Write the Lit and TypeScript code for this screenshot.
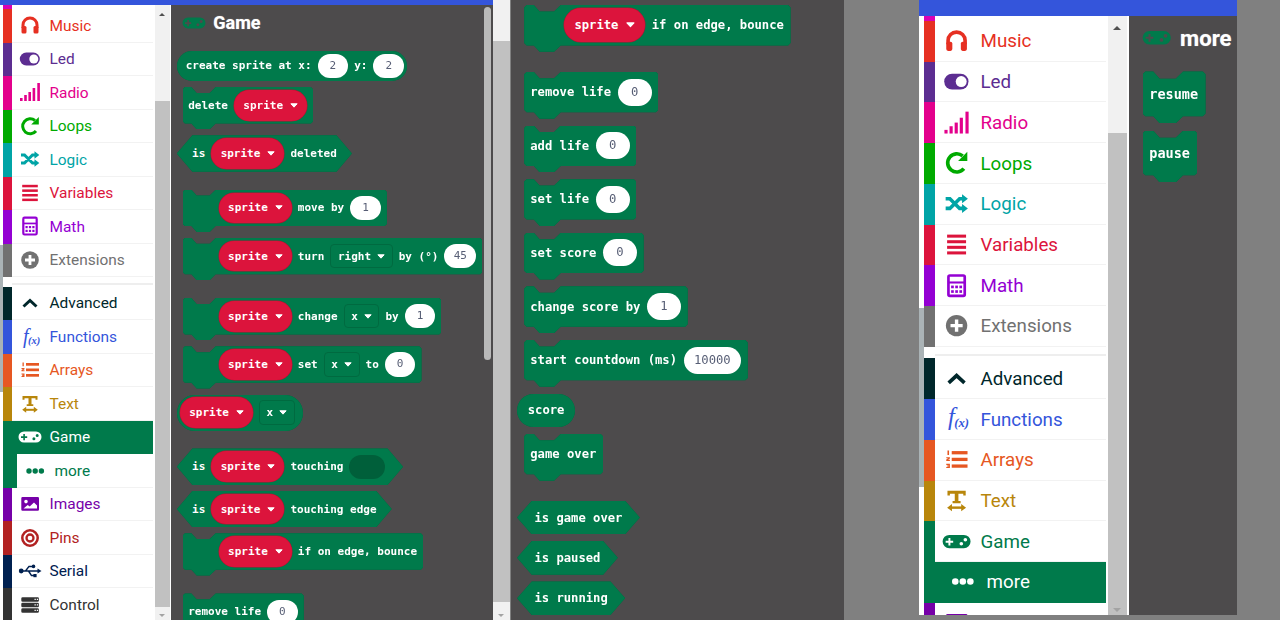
import { LitElement, html, css, svg, TemplateResult } from "lit";
import { customElement } from "lit/decorators.js";

const GAME = svg`<path fill="currentColor" fill-rule="evenodd" d="M6 6.500h12a5.500 5.500 0 0 1 0 11H6a5.500 5.500 0 0 1 0-11zM5.300 9v2.300H3v1.600h2.300v2.300h1.600v-2.300h2.300v-1.600H6.900V9zM15.900 12.300a1.500 1.500 0 1 0 0 3 1.500 1.500 0 0 0 0-3zM19.200 9a1.500 1.500 0 1 0 0 3 1.500 1.500 0 0 0 0-3z"/>`;

const ICONS: Record<string, unknown> = {
  music: svg`<path d="M5 15v-3a7 7 0 0 1 14 0v3" fill="none" stroke="currentColor" stroke-width="3"/><rect x="3.500" y="13" width="5" height="7.500" rx="1.500" fill="currentColor"/><rect x="15.500" y="13" width="5" height="7.500" rx="1.500" fill="currentColor"/>`,
  led: svg`<rect x="1.800" y="5.500" width="20" height="13" rx="6.500" fill="currentColor"/><circle cx="15.800" cy="12" r="4.500" fill="#fff"/>`,
  radio: svg`<rect x="2" y="18" width="2.600" height="3" fill="currentColor"/><rect x="6.200" y="15" width="2.600" height="6" fill="currentColor"/><rect x="10.400" y="12" width="2.600" height="9" fill="currentColor"/><rect x="14.600" y="8" width="2.600" height="13" fill="currentColor"/><rect x="19.300" y="3" width="2.600" height="18" fill="currentColor"/>`,
  loops: svg`<path d="M18 17a7.500 7.500 0 1 1-1-10.500" fill="none" stroke="currentColor" stroke-width="3"/><path d="M20.800 3v7.600h-7.600z" fill="currentColor"/>`,
  logic: svg`<path d="M3 8h3.500l8 8h2.500M3 16h3.500l8-8h2.500" fill="none" stroke="currentColor" stroke-width="3"/><path d="M16.500 4.300l4.800 3.700-4.800 3.700zM16.500 12.300l4.800 3.700-4.800 3.700z" fill="currentColor"/>`,
  variables: svg`<rect x="4.200" y="3.800" width="15.600" height="2.500" fill="currentColor"/><rect x="4.200" y="8.400" width="15.600" height="2.500" fill="currentColor"/><rect x="4.200" y="13" width="15.600" height="2.500" fill="currentColor"/><rect x="4.200" y="17.600" width="15.600" height="2.500" fill="currentColor"/>`,
  math: svg`<rect x="5.300" y="3.700" width="13.400" height="16.800" rx="1.200" fill="none" stroke="currentColor" stroke-width="2.200"/><rect x="5" y="8.600" width="14" height="1.700" fill="currentColor"/><g fill="currentColor"><rect x="7.500" y="12" width="2.200" height="2.200"/><rect x="10.900" y="12" width="2.200" height="2.200"/><rect x="14.300" y="12" width="2.200" height="2.200"/><rect x="7.500" y="15.800" width="2.200" height="2.200"/><rect x="10.900" y="15.800" width="2.200" height="2.200"/><rect x="14.300" y="15.800" width="2.200" height="2.200"/></g>`,
  extensions: svg`<circle cx="12" cy="12" r="8.800" fill="currentColor"/><path d="M12 7v10M7 12h10" stroke="#fff" stroke-width="2.800"/>`,
  advanced: svg`<path d="M5.500 15.500L12 9.500l6.500 6" fill="none" stroke="currentColor" stroke-width="3"/>`,
  functions: svg`<text x="5" y="17.500" font-family="Liberation Serif, serif" font-style="italic" font-size="20" fill="currentColor">f</text><text x="10" y="19" font-family="Liberation Serif, serif" font-style="italic" font-weight="700" font-size="10.500" fill="currentColor">(x)</text>`,
  arrays: svg`<rect x="8" y="5" width="13" height="2.700" fill="currentColor"/><rect x="8" y="10.500" width="13" height="2.700" fill="currentColor"/><rect x="8" y="16" width="13" height="2.700" fill="currentColor"/><path d="M4.500 4.500h1.300v3.800H4.500zM3.500 10h3v1.200l-1.500 1h1.500v1h-3v-1.200l1.500-1H3.500zM3.500 15.500h3v3.500h-3v-1h1.800v-.300H4v-.900h1.300v-.300H3.500z" fill="currentColor"/>`,
  text: svg`<path d="M4.500 4h15v3.800h-2V6.300h-4v6h1.800v1.800H8.700v-1.800h1.800v-6h-4v1.500h-2z" fill="currentColor"/><path d="M7 17.800h10" stroke="currentColor" stroke-width="2"/><path d="M8.200 14.800v6l-4-3zM15.800 14.800v6l4-3z" fill="currentColor"/>`,
  game: GAME,
  more: svg`<circle cx="6" cy="12" r="2.700" fill="currentColor"/><circle cx="12.200" cy="12" r="2.700" fill="currentColor"/><circle cx="18.400" cy="12" r="2.700" fill="currentColor"/>`,
  images: svg`<path fill="currentColor" fill-rule="evenodd" d="M4.500 5h15.300a1.200 1.200 0 0 1 1.200 1.200v11.400a1.200 1.200 0 0 1-1.200 1.200H4.500a1.200 1.200 0 0 1-1.200-1.200V6.200A1.200 1.200 0 0 1 4.500 5zM8 7.800a1.800 1.800 0 1 0 0 3.600 1.800 1.800 0 0 0 0-3.600zM5.500 16.600h13.500v-3l-3-3-4.300 4-2-1.500z"/>`,
  pins: svg`<circle cx="12" cy="12" r="7.700" fill="none" stroke="currentColor" stroke-width="2.500"/><circle cx="12" cy="12" r="3.500" fill="none" stroke="currentColor" stroke-width="2.300"/>`,
  serial: svg`<path d="M2 12h19M7.500 12l3.500-4.600h3.500M10.500 12l3 4.600h2.500" fill="none" stroke="currentColor" stroke-width="1.500"/><circle cx="3.200" cy="12" r="2.400" fill="currentColor"/><circle cx="15.500" cy="7.400" r="1.800" fill="currentColor"/><rect x="15.400" y="15" width="3.200" height="3.200" fill="currentColor"/><path d="M19.500 9.500l4 2.500-4 2.500z" fill="currentColor"/>`,
  control: svg`<path fill="currentColor" fill-rule="evenodd" d="M4.600 4.300h15a1.300 1.300 0 0 1 1.300 1.300v1.800a1.300 1.300 0 0 1-1.300 1.300h-15a1.300 1.300 0 0 1-1.300-1.300V5.600a1.300 1.300 0 0 1 1.300-1.300zM16.500 5.800v1.300h1.300V5.800zM18.800 5.800v1.300h1.300V5.800zM4.600 9.800h15a1.300 1.300 0 0 1 1.300 1.300v1.800a1.300 1.300 0 0 1-1.300 1.300h-15a1.300 1.300 0 0 1-1.300-1.300v-1.800a1.300 1.300 0 0 1 1.300-1.300zM16.500 11.300v1.300h1.300v-1.300zM18.800 11.300v1.300h1.300v-1.300zM4.600 15.300h15a1.300 1.300 0 0 1 1.300 1.300v1.800a1.300 1.300 0 0 1-1.300 1.300h-15a1.300 1.300 0 0 1-1.300-1.300v-1.800a1.300 1.300 0 0 1 1.300-1.300zM16.500 16.800v1.300h1.300v-1.300zM18.800 16.800v1.300h1.300v-1.300z"/>`,
};

interface Row { id: string; label: string; color: string; sub?: boolean }

const ROWS_A: Row[] = [
  { id: "music", label: "Music", color: "#e63022" },
  { id: "led", label: "Led", color: "#5c2d91" },
  { id: "radio", label: "Radio", color: "#e3008c" },
  { id: "loops", label: "Loops", color: "#00aa00" },
  { id: "logic", label: "Logic", color: "#00a4a6" },
  { id: "variables", label: "Variables", color: "#dc143c" },
  { id: "math", label: "Math", color: "#9400d3" },
  { id: "extensions", label: "Extensions", color: "#717171" },
];
const ROWS_B: Row[] = [
  { id: "advanced", label: "Advanced", color: "#00272b" },
  { id: "functions", label: "Functions", color: "#3455db" },
  { id: "arrays", label: "Arrays", color: "#e65722" },
  { id: "text", label: "Text", color: "#b8860b" },
  { id: "game", label: "Game", color: "#007a4b" },
  { id: "more", label: "more", color: "#007a4b", sub: true },
  { id: "images", label: "Images", color: "#7600a8" },
  { id: "pins", label: "Pins", color: "#b22222" },
  { id: "serial", label: "Serial", color: "#002050" },
  { id: "control", label: "Control", color: "#333333" },
];

const t = (s: string) => html`<span class="t">${s}</span>`;
const caret = html`<svg class="caret" viewBox="0 0 8 5"><path d="M.8.8h6.400L4 4.200z" fill="#fff" stroke="#fff" stroke-width="1" stroke-linejoin="round"/></svg>`;
const sprite = html`<span class="sprite"><span class="t">sprite</span>${caret}</span>`;
const val = (s: string) => html`<span class="val">${s}</span>`;
const dd = (s: string) => html`<span class="dd"><span class="t">${s}</span>${caret}</span>`;
const slot = html`<span class="slot"></span>`;

const blk = (kind: string, parts: unknown[], group = false) =>
  html`<div class="wrap ${kind.startsWith("stmt") ? "at-stmt" : ""} ${group ? "group" : ""}"><div class="b ${kind}">${parts}</div></div>`;

const PANEL1 = [
  blk("rep rep-long", [t("create sprite at x:"), val("2"), t("y:"), val("2")]),
  blk("stmt", [t("delete"), sprite]),
  blk("hex", [t("is"), sprite, t("deleted")]),
  blk("stmt lead", [sprite, t("move by"), val("1")], true),
  blk("stmt lead", [sprite, t("turn"), dd("right"), t("by (°)"), val("45")]),
  blk("stmt lead", [sprite, t("change"), dd("x"), t("by"), val("1")], true),
  blk("stmt lead", [sprite, t("set"), dd("x"), t("to"), val("0")]),
  blk("rep rep-sprite", [sprite, dd("x")]),
  blk("hex", [t("is"), sprite, t("touching"), slot], true),
  blk("hex", [t("is"), sprite, t("touching edge")]),
  blk("stmt lead", [sprite, t("if on edge, bounce")]),
  blk("stmt", [t("remove life"), val("0")], true),
];
const PANEL2 = [
  blk("stmt lead", [sprite, t("if on edge, bounce")]),
  blk("stmt", [t("remove life"), val("0")], true),
  blk("stmt", [t("add life"), val("0")]),
  blk("stmt", [t("set life"), val("0")]),
  blk("stmt", [t("set score"), val("0")]),
  blk("stmt", [t("change score by"), val("1")]),
  blk("stmt", [t("start countdown (ms)"), val("10000")]),
  blk("rep rep-text", [t("score")]),
  blk("stmt", [t("game over")]),
  blk("hex small", [t("is game over")], true),
  blk("hex small", [t("is paused")]),
  blk("hex small", [t("is running")]),
];
const PANEL3 = [blk("stmt", [t("resume")]), blk("stmt", [t("pause")])];

@customElement("app-root")
export class AppRoot extends LitElement {
  static styles = css`
    :host { display: flex; width: 1280px; height: 620px; overflow: hidden; background: #808080; font-family: Roboto, sans-serif; }
    .panel { display: flex; background: #fff; overflow: hidden; flex: none; }
    .p1 { width: 510px; height: 620px; --gut: 3px; --bar: 5px; font-size: 16px; }
    .p2 { width: 333px; height: 620px; margin-left: 1px; background: #4d4b4c; }
    .p3 { width: 318px; height: 615px; margin-left: 75px; --gut: 5px; --bar: 16px; font-size: 19.45px; }
    .main { flex: 1; min-width: 0; display: flex; flex-direction: column; }
    .bar { height: var(--bar); background: #3455db; flex: none; }
    .body { flex: 1; min-height: 0; display: flex; }
    .gutter { width: var(--gut); flex: none; padding-top: 15em; box-sizing: border-box; }
    .gutter i { display: block; height: 9.2em; background: #aab3b6; }
    .toolbox { width: 9.375em; flex: none; overflow: hidden; }
    .sliver { height: .26em; width: .5625em; background: #d900b4; }
    .row { height: 2.094em; display: flex; align-items: center; border-bottom: 1px solid #f2f2f2; box-sizing: border-box; }
    .row span:last-child { font-size: .965em; padding-top: .05em; }
    .strip { align-self: stretch; width: .5625em; flex: none; margin-bottom: -1px; }
    .row.sub .strip { width: .875em; }
    .ico { width: 1.5em; height: 1.5em; margin-left: .344em; margin-right: .5em; flex: none; display: block; overflow: visible; }
    .sep { height: .6em; display: flex; flex-direction: column; justify-content: center; padding-top: .25em; box-sizing: border-box; }
    .sep i { display: block; height: 2px; background: #eeeeee; margin-left: .5625em; }
    .row.sel { background: #007a4b; color: #fff !important; border-bottom-color: #007a4b; }
    .sb { flex: none; display: flex; flex-direction: column; background: #f1f1f1; position: relative; overflow: hidden; }
    .sb.inner { width: .95em; margin-left: .1em; margin-right: .1em; }
    .sb.page { width: 17px; }
    .thumb { background: #c1c1c1; flex: none; }
    .arr { position: absolute; left: 50%; width: 0; height: 0; margin-left: -.22em; border-left: .22em solid transparent; border-right: .22em solid transparent; }
    .arr.up { top: .5em; border-bottom: .22em solid #505050; }
    .arr.down { bottom: .18em; border-top: .22em solid #a3a3a3; }
    .flyout { flex: 1; min-width: 0; background: #4d4b4c; overflow: hidden; position: relative; font-family: "DejaVu Sans Mono", monospace; font-weight: 700; color: #fff; }
    .fs1 { font-size: 11px; }
    .fs2 { font-size: 12.2px; padding-top: 5px; box-sizing: border-box; }
    .fs3 { font-size: 13.5px; }
    .title { height: 3.27em; margin-left: .98em; margin-bottom: .9em; display: flex; align-items: center; gap: .65em; font-family: Roboto, sans-serif; }
    .title svg { width: 2.18em; height: 2.18em; color: #007a4b; flex: none; }
    .title span { font-size: 1.636em; font-weight: 700; color: #fff; text-shadow: 0 0 1px rgba(255,255,255,.6); }
    .stack { display: flex; flex-direction: column; align-items: flex-start; gap: .545em; }
    .fs1 .stack { margin-top: .12em; }
    .fs2 .stack { gap: .555em; }
    .fs3 .stack { margin-top: -.06em; }
    .wrap { filter: drop-shadow(0 0 .6px #005f3a); margin-left: .5em; }
    .wrap.at-stmt { margin-left: 1.03em; }
    .fs2 .wrap.at-stmt { margin-left: 1.08em; }
    .wrap.group { margin-top: 1.09em; }
    .b { display: flex; align-items: center; gap: .545em; background: #007a4b; white-space: pre; box-sizing: border-box; }
    .stmt { height: 3.84em; padding: 0 .55em .53em .5em; clip-path: polygon(.2em 0,.79em 0,1.27em .53em,2.45em .53em,3em 0,calc(100% - .2em) 0,100% .2em,100% 3.11em,calc(100% - .2em) 3.31em,3em 3.31em,2.45em 3.84em,1.27em 3.84em,.79em 3.31em,.2em 3.31em,0 3.11em,0 .2em); }
    .stmt.lead { padding-left: 3.27em; }
    .rep { border-radius: 2em; }
    .rep-long { height: 2.75em; padding: 0 .27em 0 .8em; }
    .rep-text { height: 2.75em; padding: 0 .87em; }
    .rep-sprite { height: 3.27em; padding: 0 .73em 0 .27em; }
    .hex { --sl: 1.41em; height: 3.31em; padding: 0 1.38em; clip-path: polygon(var(--sl) 0,calc(100% - var(--sl)) 0,100% 50%,calc(100% - var(--sl)) 100%,var(--sl) 100%,0 50%); }
    .hex.small { --sl: 1.2em; height: 2.75em; padding: 0 1.42em; }
    .t { display: block; }
    .sprite { display: flex; align-items: center; height: 2.77em; padding: 0 .82em 0 .85em; gap: .64em; border-radius: 1.4em; background: #dc143c; box-shadow: 0 0 0 .5px #b30f30; }
    .caret { width: .73em; height: .45em; display: block; flex: none; }
    .val { display: block; height: 2.21em; line-height: 2.21em; min-width: 2.79em; padding: 0 .85em; box-sizing: border-box; text-align: center; border-radius: 1.2em; background: #fff; color: #575e75; font-weight: 400; }
    .dd { display: flex; align-items: center; height: 2.21em; padding: 0 .6em; gap: .55em; border: 1px solid #006a40; border-radius: .36em; box-sizing: border-box; }
    .slot { display: block; width: 3.25em; height: 2.21em; border-radius: 1.2em; background: #005f3a; margin-right: .25em; }
    .fthumb { position: absolute; right: 1.7px; top: 2px; width: 7.6px; height: 353px; background: #b9b9b9; border-radius: 4px; }
  `;

  private icon(id: string) {
    return html`<svg class="ico" viewBox="0 0 24 24">${ICONS[id]}</svg>`;
  }

  private row(r: Row, selected: string) {
    const sel = r.id === selected;
    return html`<div class="row ${sel ? "sel" : ""} ${r.sub ? "sub" : ""}" style="color:${r.color}">
      <span class="strip" style="background:${r.color}"></span>
      ${this.icon(r.id)}<span>${r.label}</span>
    </div>`;
  }

  private toolbox(selected: string, lower: Row[]) {
    return html`<div class="gutter"><i></i></div>
      <div class="toolbox">
        <div class="sliver"></div>
        ${ROWS_A.map((r) => this.row(r, selected))}
        <div class="sep"><i></i></div>
        ${lower.map((r) => this.row(r, selected))}
      </div>
      <div class="sb inner">
        <span class="arr up"></span>
        <div class="thumb" style="margin-top:6.03em;height:31.6em"></div>
        <span class="arr down"></span>
      </div>`;
  }

  private title(label: string) {
    return html`<div class="title"><svg viewBox="0 0 24 24">${GAME}</svg><span>${label}</span></div>`;
  }

  render(): TemplateResult {
    return html`
      <section class="panel p1">
        <div class="main">
          <div class="bar"></div>
          <div class="body">
            ${this.toolbox("game", ROWS_B)}
            <div class="flyout fs1">
              ${this.title("Game")}
              <div class="stack">${PANEL1}</div>
              <div class="fthumb"></div>
            </div>
          </div>
        </div>
        <div class="sb page">
          <div class="thumb" style="margin-top:41px;height:561px"></div>
          <span class="arr down"></span>
        </div>
      </section>
      <section class="panel p2">
        <div class="flyout fs2"><div class="stack">${PANEL2}</div></div>
      </section>
      <section class="panel p3">
        <div class="main">
          <div class="bar"></div>
          <div class="body">
            ${this.toolbox("more", ROWS_B.slice(0, 7))}
            <div class="flyout fs3">
              ${this.title("more")}
              <div class="stack">${PANEL3}</div>
            </div>
          </div>
        </div>
      </section>
    `;
  }
}
